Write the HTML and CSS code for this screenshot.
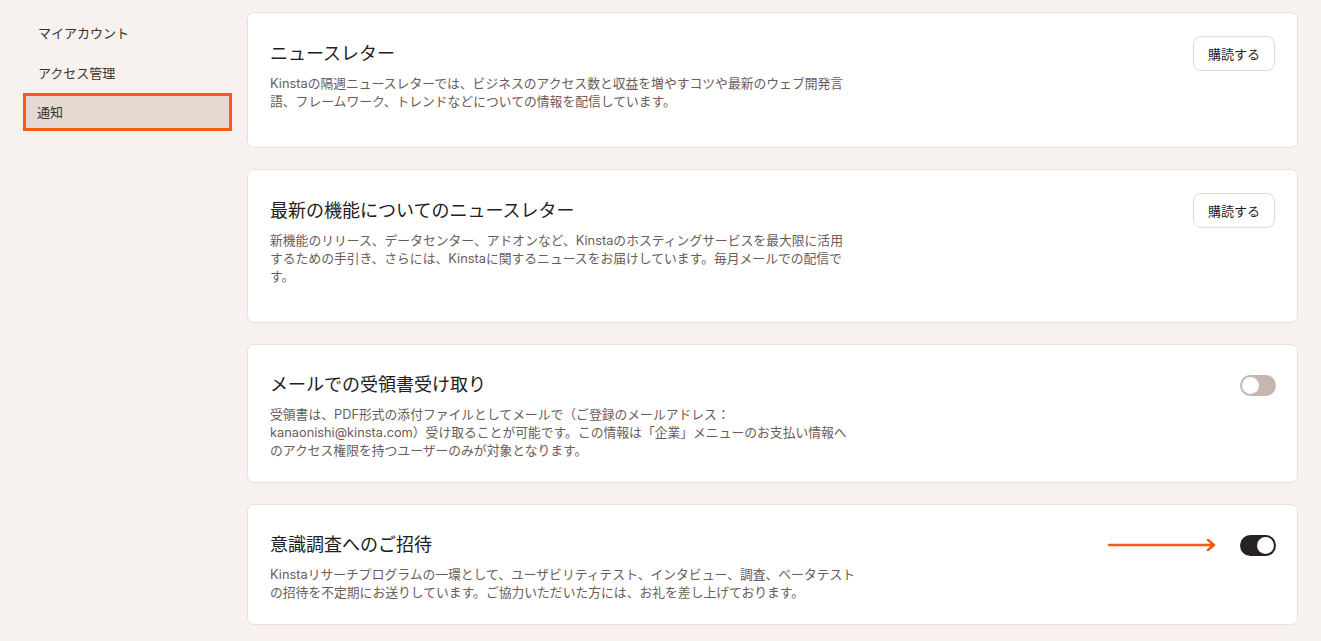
FILE: index.html
```html
<!DOCTYPE html>
<html lang="ja">
<head>
  <meta charset="UTF-8" />
  <meta name="viewport" content="width=device-width, initial-scale=1.0"/>
  <title>通知 - Kinsta</title>
  <link rel="stylesheet" href="styles.css">
</head>
<body>
  <div class="page">
    <!-- Sidebar -->
    <nav class="sidebar">
      <a class="nav-item" href="#">マイアカウント</a>
      <a class="nav-item" href="#">アクセス管理</a>
      <a class="nav-item active" href="#">通知</a>
    </nav>

    <!-- Notification settings -->
    <main class="content">
      <section class="card card-button">
        <div class="card-head">
          <h2>ニュースレター</h2>
          <button class="btn">購読する</button>
        </div>
        <p class="desc">Kinstaの隔週ニュースレターでは、ビジネスのアクセス数と収益を増やすコツや最新のウェブ開発言<br>語、フレームワーク、トレンドなどについての情報を配信しています。</p>
      </section>

      <section class="card card-button">
        <div class="card-head">
          <h2>最新の機能についてのニュースレター</h2>
          <button class="btn">購読する</button>
        </div>
        <p class="desc">新機能のリリース、データセンター、アドオンなど、Kinstaのホスティングサービスを最大限に活用<br>するための手引き、さらには、Kinstaに関するニュースをお届けしています。毎月メールでの配信で<br>す。</p>
      </section>

      <section class="card">
        <div class="card-head">
          <h2>メールでの受領書受け取り</h2>
          <span class="toggle"></span>
        </div>
        <p class="desc">受領書は、PDF形式の添付ファイルとしてメールで（ご登録のメールアドレス：<br>kanaonishi@kinsta.com）受け取ることが可能です。この情報は「企業」メニューのお支払い情報へ<br>のアクセス権限を持つユーザーのみが対象となります。</p>
      </section>

      <section class="card">
        <div class="card-head">
          <h2>意識調査へのご招待</h2>
          <svg class="arrow" width="110" height="14" viewBox="0 0 110 14">
            <path d="M1 7H106M100 2L106 7L100 12" fill="none" stroke="#fb5a14" stroke-width="2.5" stroke-linecap="round" stroke-linejoin="round"/>
          </svg>
          <span class="toggle on"></span>
        </div>
        <p class="desc">Kinstaリサーチプログラムの一環として、ユーザビリティテスト、インタビュー、調査、ベータテスト<br>の招待を不定期にお送りしています。ご協力いただいた方には、お礼を差し上げております。</p>
      </section>
    </main>
  </div>
</body>
</html>
```

FILE: styles.css
```css
:root {
  --bg-color: #f7f2ef;
  --border-color: #ecdfd8;
  --text-color: #221c1c;
  --muted-color: #6d5b58;
  --accent-color: #fb5a14;
}

body {
  font-family: 'Inter', 'Noto Sans CJK JP', sans-serif;
  background: var(--bg-color);
  color: var(--text-color);
  margin: 0;
}

.page {
  display: flex;
  padding: 12px 23px 16px 24px;
}

/* Sidebar */
.sidebar {
  width: 208px;
  flex-shrink: 0;
  margin-right: 15px;
  padding-top: 2px;
  display: flex;
  flex-direction: column;
  gap: 2px;
}

.nav-item {
  display: block;
  height: 38px;
  line-height: 38px;
  padding-left: 14px;
  font-size: 13px;
  color: #3a3131;
  text-decoration: none;
  box-sizing: border-box;
}

.nav-item.active {
  background: #e6d9d1;
  border: 3px solid var(--accent-color);
  line-height: 32px;
  padding-left: 11px;
  margin-left: -1px;
  margin-top: -1px;
}

/* Cards */
.content {
  flex: 1;
  display: flex;
  flex-direction: column;
  gap: 21px;
}

.card {
  background: #fff;
  border: 1px solid var(--border-color);
  border-radius: 7px;
  padding: 23px 22px 22px 22px;
}

.card-button {
  padding-bottom: 36px;
}

.card-head {
  display: flex;
  align-items: center;
  justify-content: space-between;
  position: relative;
  min-height: 34px;
}

.card-head h2 {
  margin: 0;
  font-size: 18px;
  font-weight: 400;
  line-height: 34px;
  color: var(--text-color);
}

.desc {
  margin: 4px 0 0;
  max-width: 620px;
  font-size: 12.8px;
  line-height: 18px;
  color: var(--muted-color);
}

.btn {
  background: #fff;
  border: 1px solid #e8d8cf;
  border-radius: 8px;
  height: 35px;
  padding: 0 14px;
  font-family: inherit;
  font-size: 13px;
  color: var(--text-color);
  cursor: pointer;
}

/* Toggle switch */
.toggle {
  position: relative;
  width: 36px;
  height: 21px;
  border-radius: 11px;
  background: #c6b6b0;
  margin-right: -1px;
}

.toggle::after {
  content: '';
  position: absolute;
  top: 2px;
  left: 2px;
  width: 17px;
  height: 17px;
  border-radius: 50%;
  background: #fff;
}

.toggle.on {
  background: #272121;
}

.toggle.on::after {
  left: 17px;
}

.arrow {
  position: absolute;
  right: 57px;
  top: 10px;
}
```
